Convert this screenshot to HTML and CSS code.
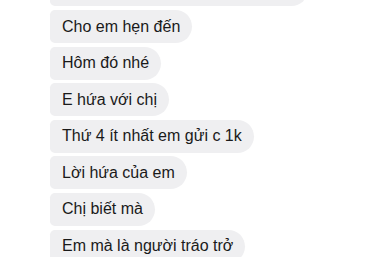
FILE: index.html
```html
<!DOCTYPE html>
<html lang="vi">
<head>
<meta charset="utf-8">
<link rel="stylesheet" href="styles.css">
</head>
<body>
<div class="chat">
  <div class="bubble bubble-wide">&nbsp;</div>
  <div class="bubble">Cho em hẹn đến</div>
  <div class="bubble">Hôm đó nhé</div>
  <div class="bubble">E hứa với chị</div>
  <div class="bubble">Thứ 4 ít nhất em gửi c 1k</div>
  <div class="bubble">Lời hứa của em</div>
  <div class="bubble">Chị biết mà</div>
  <div class="bubble">Em mà là người tráo trở</div>
</div>
</body>
</html>
```
FILE: styles.css
```css
html, body {
  margin: 0;
  padding: 0;
  background: #ffffff;
  overflow: hidden;
}
body {
  width: 374px;
  height: 257px;
  font-family: "Liberation Sans", Arial, sans-serif;
}
.chat {
  display: flex;
  flex-direction: column;
  align-items: flex-start;
  gap: 3.6px;
  padding-left: 49.5px;
  margin-top: -26.6px;
}
.bubble {
  box-sizing: border-box;
  height: 33px;
  padding: 0 12px 0 12.5px;
  display: flex;
  align-items: center;
  background: #efeff1;
  color: #1a1a1a;
  font-size: 16px;
  line-height: 18px;
  white-space: nowrap;
  border-radius: 5px 17px 17px 5px;
}
.bubble-wide {
  width: 258px;
}
```
